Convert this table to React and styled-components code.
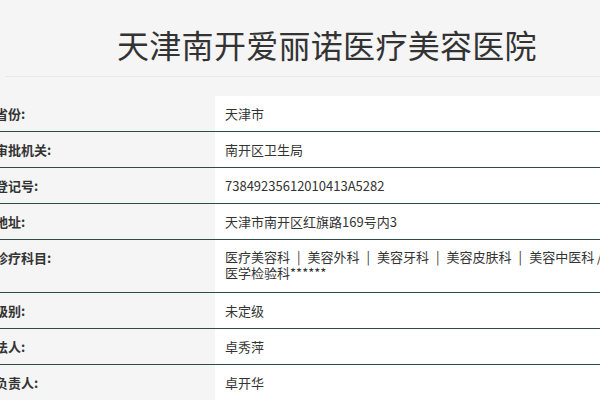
import React from "react";
import styled, { createGlobalStyle } from "styled-components";

const GlobalStyle = createGlobalStyle`
  html, body {
    margin: 0;
    padding: 0;
    background: #f5f5f5;
    overflow: hidden;
  }
  body {
    font-family: "Noto Sans CJK SC", "Microsoft YaHei", sans-serif;
    color: #333;
  }
`;

// Styled Components ======================================================

const Page = styled.div`
  width: 600px;
  height: 400px;
  overflow: hidden;
`;

const Header = styled.div`
  margin-left: 5px;
  height: 77px;
  box-sizing: border-box;
  padding: 24px 0 0 112px;
  border-bottom: 1px solid #e9e9e9;
`;

const Title = styled.h1`
  margin: 0;
  font-size: 32px;
  line-height: 40px;
  font-weight: 400;
  letter-spacing: 0.3px;
  color: #333;
  white-space: nowrap;
`;

const Table = styled.div`
  margin: 19px 0 0 -10px;
  width: 900px;
`;

const Row = styled.div`
  display: grid;
  grid-template-columns: 225px 1fr;
  border-bottom: 1px solid #2d4d43;
`;

const Label = styled.div`
  padding: 0 0 0 5px;
  min-height: ${(p) => (p.tall ? 52 : 35)}px;
  font-size: 13px;
  font-weight: 700;
  line-height: 35px;
  color: #333;
`;

const Value = styled.div`
  background: #fff;
  padding: ${(p) => (p.tall ? "9px 0 0 10px" : "0 0 0 10px")};
  min-height: ${(p) => (p.tall ? 43 : 35)}px;
  font-size: 13px;
  line-height: ${(p) => (p.tall ? "16px" : "35px")};
  color: #333;
  white-space: nowrap;
`;

const Sep = styled.span`
  margin: 0 7px;
`;

// =========================================================================

const rows = [
  { label: "省份:", value: "天津市" },
  { label: "审批机关:", value: "南开区卫生局" },
  { label: "登记号:", value: "73849235612010413A5282" },
  { label: "地址:", value: "天津市南开区红旗路169号内3" },
  { label: "诊疗科目:", tall: true },
  { label: "级别:", value: "未定级" },
  { label: "法人:", value: "卓秀萍" },
  { label: "负责人:", value: "卓开华" },
];

const depts = ["医疗美容科", "美容外科", "美容牙科", "美容皮肤科"];

export default function App() {
  return (
    <Page>
      <GlobalStyle />
      <Header>
        <Title>天津南开爱丽诺医疗美容医院</Title>
      </Header>
      <Table>
        {rows.map((r) => (
          <Row key={r.label}>
            <Label tall={r.tall}>{r.label}</Label>
            <Value tall={r.tall}>
              {r.tall ? (
                <>
                  {depts.map((d) => (
                    <React.Fragment key={d}>
                      {d}
                      <Sep>|</Sep>
                    </React.Fragment>
                  ))}
                  美容中医科 /
                  <br />
                  医学检验科******
                </>
              ) : (
                r.value
              )}
            </Value>
          </Row>
        ))}
      </Table>
    </Page>
  );
}
